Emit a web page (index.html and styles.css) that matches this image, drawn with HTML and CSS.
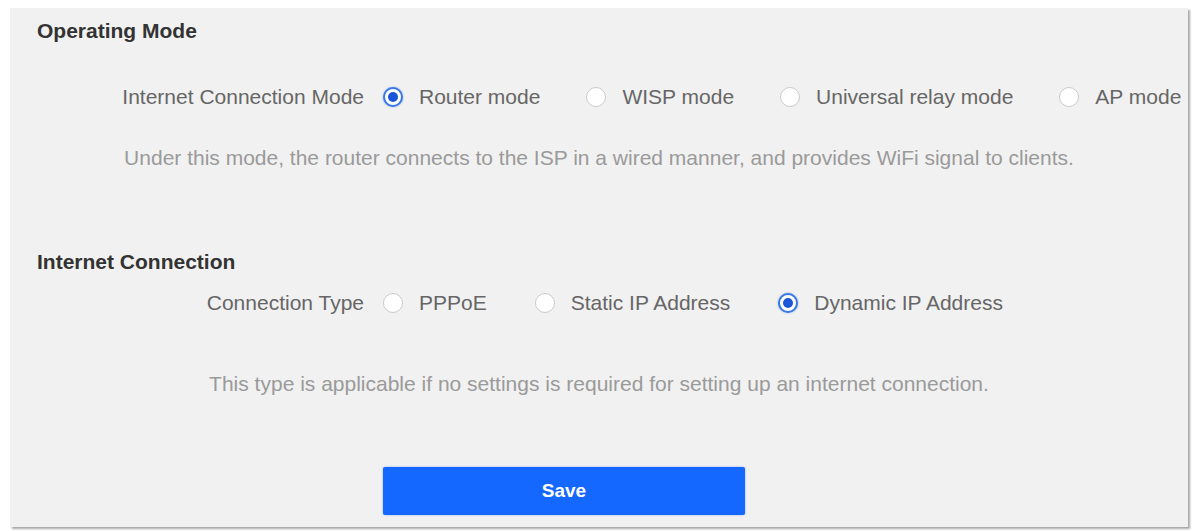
FILE: index.html
```html
<!DOCTYPE html>
<html lang="en">
<head>
<meta charset="utf-8">
<title>Internet Settings</title>
<link rel="stylesheet" href="styles.css">
</head>
<body>
<div class="panel">
  <section class="group">
    <h2 class="group-title">Operating Mode</h2>
    <div class="field">
      <span class="field-label">Internet Connection Mode</span>
      <div class="options">
        <label class="option"><span class="radio checked"></span>Router mode</label>
        <label class="option"><span class="radio"></span>WISP mode</label>
        <label class="option"><span class="radio"></span>Universal relay mode</label>
        <label class="option"><span class="radio"></span>AP mode</label>
      </div>
    </div>
    <p class="hint hint-mode">Under this mode, the router connects to the ISP in a wired manner, and provides WiFi signal to clients.</p>
  </section>
  <section class="group group-conn">
    <h2 class="group-title">Internet Connection</h2>
    <div class="field field-conn">
      <span class="field-label">Connection Type</span>
      <div class="options">
        <label class="option"><span class="radio"></span>PPPoE</label>
        <label class="option"><span class="radio"></span>Static IP Address</label>
        <label class="option"><span class="radio checked"></span>Dynamic IP Address</label>
      </div>
    </div>
    <p class="hint hint-conn">This type is applicable if no settings is required for setting up an internet connection.</p>
  </section>
  <div class="actions">
    <button class="btn-save" type="button">Save</button>
  </div>
</div>
</body>
</html>
```
FILE: styles.css
```css
* { box-sizing: border-box; }

html, body {
  margin: 0;
  background: #ffffff;
}

body {
  padding: 8px 7px 4px 10px;
  font-family: "Liberation Sans", Arial, sans-serif;
  height: 531px;
  overflow: hidden;
}

.panel {
  background: #f1f1f1;
  width: 1178px;
  height: 519px;
  box-shadow: 2px 2px 2px rgba(0, 0, 0, 0.35);
  padding: 11px 0 0 27px;
  color: #666;
}

.group-title {
  margin: 0;
  font-size: 21px;
  font-weight: bold;
  color: #333;
  line-height: 24px;
}

.field {
  display: flex;
  align-items: center;
  margin-top: 42px;
  font-size: 21px;
  line-height: 24px;
  white-space: nowrap;
}

.field-label {
  width: 346px;
  text-align: right;
  padding-right: 19px;
  flex: none;
}

.options {
  display: flex;
  align-items: center;
  flex: none;
}

.option {
  display: flex;
  align-items: center;
  flex: none;
  margin-right: 46px;
}

.option:last-child { margin-right: 0; }

.radio {
  width: 20px;
  height: 20px;
  border-radius: 50%;
  border: 1px solid #cacaca;
  background: #fff;
  margin-right: 16px;
  flex: none;
  position: relative;
}

.radio.checked {
  border: 2px solid #3a78e8;
  box-shadow: 0 0 2px rgba(45, 111, 230, 0.5);
}

.radio.checked::after {
  content: "";
  position: absolute;
  left: 3px;
  top: 3px;
  width: 10px;
  height: 10px;
  border-radius: 50%;
  background: #1d55d8;
}

.hint {
  margin: 37px 0 0 -27px;
  text-align: center;
  font-size: 21px;
  line-height: 24px;
  color: #9a9a9a;
}

.group-conn {
  margin-top: 80px;
}

.field-conn {
  margin-top: 17px;
}

.field-conn .option { margin-right: 48px; }
.field-conn .option:last-child { margin-right: 0; }

.hint-conn {
  margin-top: 57px;
}

.actions {
  margin-top: 71px;
  padding-left: 346px;
}

.btn-save {
  width: 362px;
  height: 48px;
  border: none;
  border-radius: 2px;
  background: #1467ff;
  color: #fff;
  font-family: "Liberation Sans", Arial, sans-serif;
  font-size: 19px;
  font-weight: bold;
  box-shadow: 0 0 2px rgba(20, 103, 255, 0.5);
}
```
